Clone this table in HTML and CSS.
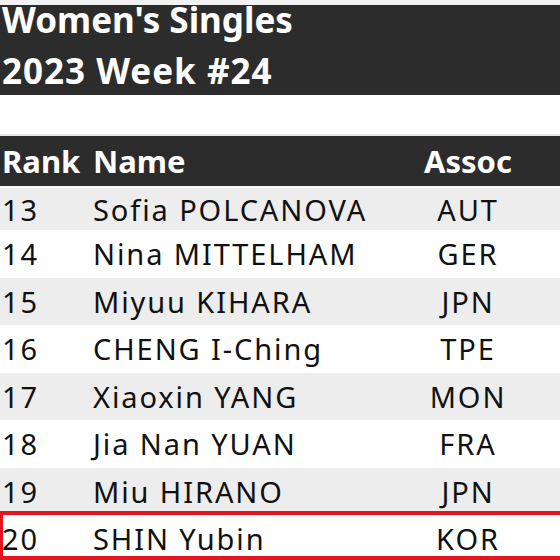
FILE: index.html
```html
<!DOCTYPE html>
<html lang="en">
<head>
<meta charset="utf-8">
<title>Women's Singles 2023 Week #24</title>
<link rel="stylesheet" href="styles.css">
</head>
<body>
<div class="page">
  <div class="topline"></div>
  <header class="banner">
    <h1 class="title"><span class="title-line">Women's Singles</span><span class="title-line wide">2023 Week #24</span></h1>
  </header>
  <div class="spacer"></div>
  <div class="table">
    <div class="row head">
      <div class="c-rank">Rank</div>
      <div class="c-name">Name</div>
      <div class="c-assoc">Assoc</div>
    </div>
    <div class="row alt first">
      <div class="c-rank">13</div>
      <div class="c-name">Sofia POLCANOVA</div>
      <div class="c-assoc">AUT</div>
    </div>
    <div class="row">
      <div class="c-rank">14</div>
      <div class="c-name">Nina MITTELHAM</div>
      <div class="c-assoc">GER</div>
    </div>
    <div class="row alt">
      <div class="c-rank">15</div>
      <div class="c-name">Miyuu KIHARA</div>
      <div class="c-assoc">JPN</div>
    </div>
    <div class="row">
      <div class="c-rank">16</div>
      <div class="c-name">CHENG I-Ching</div>
      <div class="c-assoc">TPE</div>
    </div>
    <div class="row alt">
      <div class="c-rank">17</div>
      <div class="c-name">Xiaoxin YANG</div>
      <div class="c-assoc">MON</div>
    </div>
    <div class="row">
      <div class="c-rank">18</div>
      <div class="c-name">Jia Nan YUAN</div>
      <div class="c-assoc">FRA</div>
    </div>
    <div class="row alt">
      <div class="c-rank">19</div>
      <div class="c-name">Miu HIRANO</div>
      <div class="c-assoc">JPN</div>
    </div>
    <div class="row highlight">
      <div class="c-rank">20</div>
      <div class="c-name">SHIN Yubin</div>
      <div class="c-assoc">KOR</div>
    </div>
  </div>
</div>
</body>
</html>
```

FILE: styles.css
```css
html, body {
  margin: 0;
  padding: 0;
  background: #ffffff;
}

.page {
  width: 560px;
  height: 560px;
  overflow: hidden;
  font-family: "Noto Sans", "Open Sans", "DejaVu Sans", sans-serif;
  color: #111111;
}

.topline {
  height: 5px;
  background: #f2f2f2;
}

.banner {
  height: 90px;
  background: #2c2c2c;
  overflow: hidden;
}

.title {
  display: flex;
  flex-direction: column;
  margin: -11px 0 0 0;
  padding-left: 2px;
  font-size: 35px;
  line-height: 51px;
  font-weight: 700;
  color: #ffffff;
}

.title-line.wide {
  letter-spacing: 1px;
}

.spacer {
  height: 39px;
  border-bottom: 2px solid #e6e6e6;
}

.table {
  display: flex;
  flex-direction: column;
}

.row {
  display: grid;
  grid-template-columns: 93px 307px 134px 1fr;
  align-items: center;
  height: 47.5px;
  font-size: 29px;
  letter-spacing: 1.9px;
  background: #ffffff;
}

.row.alt {
  background: #ededed;
}

.row.first {
  height: 42px;
  border-top: 2px solid #f7f7f7;
}

.row.head {
  height: 50px;
  background: #2c2c2c;
  color: #ffffff;
  font-weight: 700;
  font-size: 31px;
  letter-spacing: 0;
}

.c-rank {
  padding-left: 2px;
}

.c-assoc {
  text-align: center;
  padding-left: 2px;
}

.row.highlight {
  position: relative;
}

.row.highlight::after {
  content: "";
  position: absolute;
  left: 0;
  right: 0;
  top: -4px;
  height: 49px;
  box-sizing: border-box;
  border: 4px solid #e3161f;
  border-left-width: 3px;
  border-right: 0;
}
```
